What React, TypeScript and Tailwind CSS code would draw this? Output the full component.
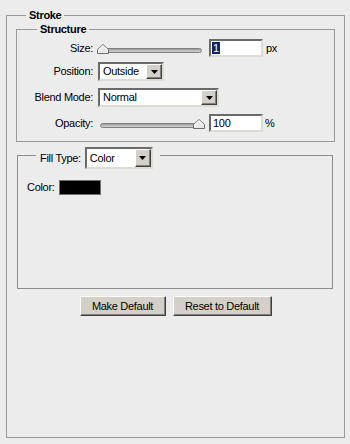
import React from "react";

const font = { fontFamily: '"Liberation Sans", Arial, sans-serif', letterSpacing: "-0.3px" };

function Thumb() {
  return (
    <svg width="12" height="10" viewBox="0 0 12 10" className="block">
      <path d="M0.5 9.5 L0.5 5.5 L6 0.5 L11.5 5.5 L11.5 9.5 Z" fill="#e9e9e9" stroke="#6e6e6e" strokeWidth="1" />
      <path d="M1.5 8.5 L1.5 5.9 L6 1.8 L10.5 5.9" fill="none" stroke="#ffffff" strokeWidth="1" />
    </svg>
  );
}

function Slider({ atEnd }: { atEnd?: boolean }) {
  return (
    <div className="relative w-[108px] h-full shrink-0">
      <div className="absolute left-[3px] top-[9px] w-[102px] h-[5px] rounded-[3px] border border-[#7f7f7f] bg-gradient-to-b from-[#9c9c9c] to-[#d6d6d6]" />
      <div className={atEnd ? "absolute left-[96px] top-[5px]" : "absolute left-0 top-[5px]"}>
        <Thumb />
      </div>
    </div>
  );
}

function TextBox({ children }: { children: React.ReactNode }) {
  return (
    <div className="w-[54px] h-full bg-white border-2 border-t-[#6a6a6a] border-l-[#6a6a6a] border-r-[#dedbd4] border-b-[#dedbd4] flex items-center pl-[1px] text-[11px] text-black leading-none">
      {children}
    </div>
  );
}

function Arrow() {
  return (
    <svg width="7" height="4" viewBox="0 0 7 4" className="block">
      <path d="M0 0 H7 L3.5 4 Z" fill="#000" />
    </svg>
  );
}

function Select({ w, value, h = "h-[19px]" }: { w: string; value: string; h?: string }) {
  return (
    <div className={`${w} ${h} shrink-0 bg-white border-2 border-t-[#6a6a6a] border-l-[#6a6a6a] border-r-[#dedbd4] border-b-[#dedbd4] flex items-stretch`}>
      <div className="flex-1 flex items-center pl-[3px] text-[11px] text-black leading-none">{value}</div>
      <div className="w-[16px] bg-[#d4d0c8] border border-t-white border-l-white border-r-[#404040] border-b-[#404040] shadow-[inset_-1px_-1px_0_#808080] flex items-center justify-center">
        <Arrow />
      </div>
    </div>
  );
}

function Label({ children }: { children: React.ReactNode }) {
  return <div className="w-[76px] shrink-0 text-right text-[11px] text-black leading-none">{children}</div>;
}

function Button({ w, children }: { w: string; children: React.ReactNode }) {
  return (
    <div className={`${w} h-[20px] bg-[#d4d0c8] border border-t-white border-l-white border-r-[#404040] border-b-[#404040] shadow-[inset_-1px_-1px_0_#808080] flex items-center justify-center text-[11px] text-black leading-none`}>
      {children}
    </div>
  );
}

export default function App() {
  return (
    <div className="w-[350px] h-[444px] bg-[#ececec] pt-[8px] px-[6px]" style={font}>
      <fieldset className="w-[339px] h-[430px] border border-[#9a9a9a]">
        <legend className="ml-[19px] px-[3px] text-[11px] font-bold leading-[14px] text-black">Stroke</legend>
        <fieldset className="ml-[9px] w-[319px] h-[120px] border border-[#9a9a9a]">
          <legend className="ml-[20px] px-[3px] text-[11px] font-bold leading-[14px] text-black">Structure</legend>
          <div className="mt-[3px] h-[18px] flex items-center">
            <Label>Size:</Label>
            <div className="ml-[4px] h-full flex items-center">
              <Slider />
              <div className="ml-[4px] h-full">
                <TextBox>
                  <span className="bg-[#0a246a] text-white px-[1px] leading-[12px]">1</span>
                </TextBox>
              </div>
              <span className="ml-[3px] text-[11px] text-black">px</span>
            </div>
          </div>
          <div className="mt-[5px] h-[19px] flex items-center">
            <Label>Position:</Label>
            <div className="ml-[5px]">
              <Select w="w-[66px]" value="Outside" />
            </div>
          </div>
          <div className="mt-[7px] h-[19px] flex items-center">
            <Label>Blend Mode:</Label>
            <div className="ml-[5px]">
              <Select w="w-[121px]" value="Normal" />
            </div>
          </div>
          <div className="mt-[7px] h-[18px] flex items-center">
            <Label>Opacity:</Label>
            <div className="ml-[4px] h-full flex items-center">
              <Slider atEnd />
              <div className="ml-[4px] h-full">
                <TextBox>
                  <span className="pl-[1px]">100</span>
                </TextBox>
              </div>
              <span className="ml-[2px] text-[11px] text-black">%</span>
            </div>
          </div>
        </fieldset>

        <div className="relative mt-[13px] ml-[10px] w-[316px] h-[134px] border border-[#8c8c8c]">
          <div className="absolute left-[18px] top-[-9px] h-[22px] flex items-center bg-[#ececec] pl-[4px] pr-[7px]">
            <span className="text-[11px] text-black leading-none">Fill Type:</span>
            <div className="ml-[4px]">
              <Select w="w-[68px]" h="h-[22px]" value="Color" />
            </div>
          </div>
          <div className="mt-[24px] pl-[9px] flex items-center">
            <span className="text-[11px] text-black leading-none">Color:</span>
            <div className="ml-[4px] w-[42px] h-[15px] bg-black border border-[#6f6f6f]" />
          </div>
        </div>

        <div className="mt-[7px] flex justify-center gap-[7px]">
          <Button w="w-[86px]">Make Default</Button>
          <Button w="w-[99px]">Reset to Default</Button>
        </div>
      </fieldset>
    </div>
  );
}
